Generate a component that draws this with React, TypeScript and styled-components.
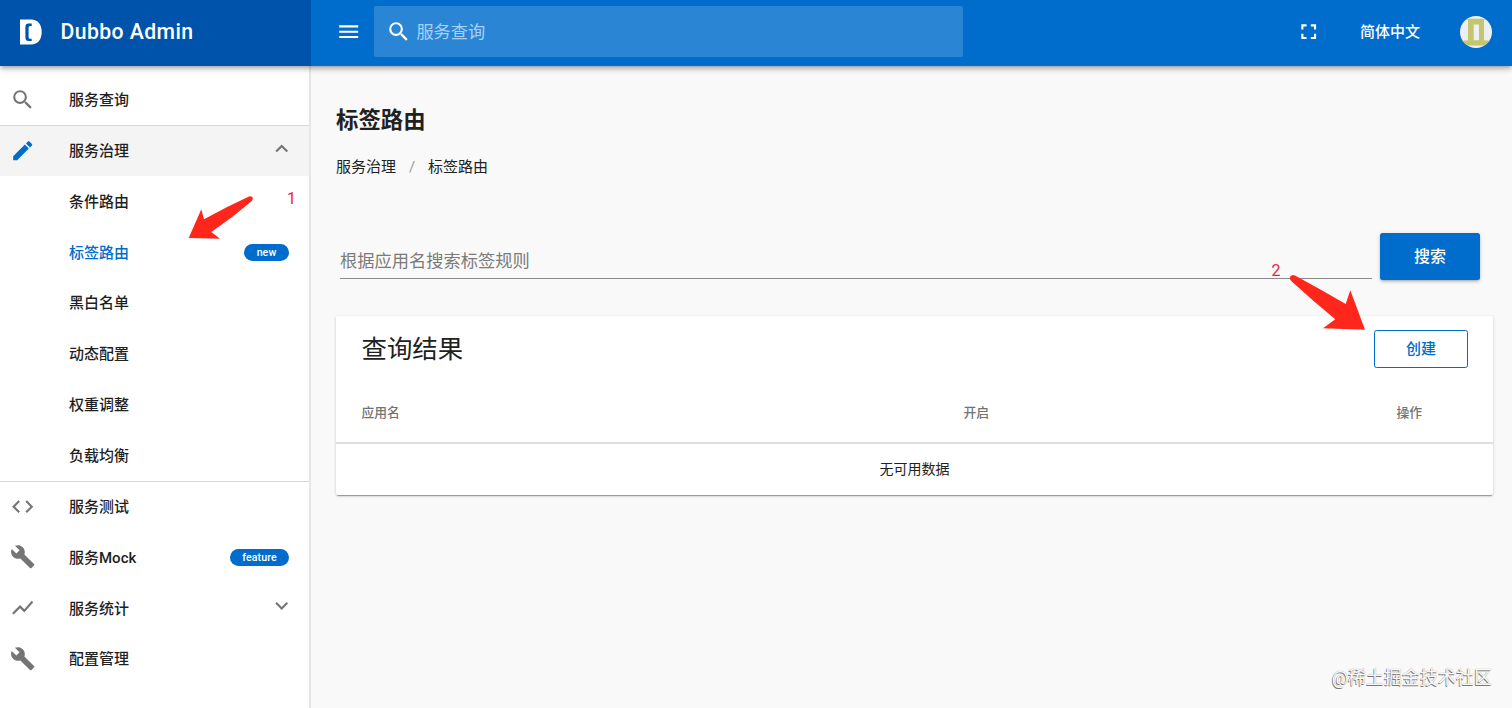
import React from 'react';
import styled, { createGlobalStyle, css } from 'styled-components';
import {
  MdBuild,
  MdCode,
  MdEdit,
  MdFullscreen,
  MdKeyboardArrowDown,
  MdKeyboardArrowUp,
  MdMenu,
  MdSearch,
  MdShowChart,
} from 'react-icons/md';

const BLUE = '#006ccb';
const BLUE_DARK = '#0053aa';

const GlobalStyle = createGlobalStyle`
  * { box-sizing: border-box; }
  body {
    margin: 0;
    background: #f9f9f9;
    color: #212121;
    font-family: Roboto, 'Noto Sans CJK SC', sans-serif;
    overflow: hidden;
  }
  svg { display: block; flex: none; }
`;

const Page = styled.div`
  position: relative;
  display: flex;
  flex-direction: column;
  height: 708px;
  overflow: hidden;
`;

const Header = styled.header`
  display: flex;
  flex: none;
  height: 66px;
  color: #fff;
  background: ${BLUE};
  box-shadow: 0 2px 4px -1px rgba(0, 0, 0, 0.25), 0 4px 5px rgba(0, 0, 0, 0.12), 0 1px 9px rgba(0, 0, 0, 0.1);
  z-index: 1;
`;

const Brand = styled.div`
  display: flex;
  align-items: center;
  width: 311px;
  padding: 0 0 3px 20px;
  background: ${BLUE_DARK};
`;

const BrandName = styled.span`
  margin: 1px 0 0 18.5px;
  font-size: 21.2px;
  font-weight: 500;
  letter-spacing: 0.42px;
  line-height: 30px;
`;

const Toolbar = styled.div`
  display: flex;
  flex: 1;
  align-items: center;
  padding: 0 20px 3px 25px;
`;

const SearchField = styled.div`
  display: flex;
  align-items: center;
  width: 589px;
  height: 51px;
  margin-left: 12.6px;
  padding-left: 12.5px;
  border-radius: 2px;
  background: #2b85d5;
`;

const SearchHint = styled.span`
  margin-left: 4.5px;
  font-size: 17.2px;
  line-height: 24px;
  color: #a6d3f5;
`;

const Actions = styled.div`
  display: flex;
  align-items: center;
  margin-left: auto;
`;

const Language = styled.span`
  margin: 0 40px 0 38.5px;
  font-size: 15px;
  font-weight: 500;
  line-height: 22px;
`;

const Body = styled.div`
  display: flex;
  flex: 1;
  min-height: 0;
`;

const Sidebar = styled.nav`
  flex: none;
  width: 311px;
  padding-top: 8px;
  background: #fff;
  border-right: 2px solid #e6e6e6;
`;

const MenuRow = styled.div<{ $shaded?: boolean; $active?: boolean; $line?: boolean }>`
  display: flex;
  align-items: center;
  height: 50.87px;
  padding: 0 15px 0 9.5px;
  font-size: 15px;
  font-weight: 500;
  color: ${(p) => (p.$active ? BLUE : '#1f1f1f')};
  background: ${(p) => (p.$shaded ? '#f4f4f4' : 'transparent')};
  ${(p) =>
    p.$line &&
    css`
      border-top: 1px solid #d8d8d8;
    `}
`;

const IconSlot = styled.span<{ $accent?: boolean }>`
  flex: none;
  width: 59.5px;
  color: ${(p) => (p.$accent ? BLUE : '#757575')};
`;

const Label = styled.span<{ $drop?: boolean }>`
  flex: 1;
  padding-top: ${(p) => (p.$drop ? 1.2 : 0)}px;
  line-height: 22px;
`;

const Chevron = styled.span`
  margin-bottom: 4px;
  color: #757575;
`;

const Pill = styled.span<{ $width: number }>`
  width: ${(p) => p.$width}px;
  height: 17px;
  margin-right: 5px;
  border-radius: 9px;
  background: ${BLUE};
  color: #fff;
  font-size: 10.6px;
  font-weight: 500;
  letter-spacing: 0.1px;
  line-height: 17px;
  text-align: center;
`;

const Content = styled.main`
  flex: 1;
  padding: 38px 19px 0 25px;
`;

const Title = styled.h1`
  margin: 0;
  font-size: 22.4px;
  font-weight: 700;
  line-height: 32px;
`;

const Crumbs = styled.div`
  display: flex;
  margin-top: 20px;
  font-size: 15px;
  line-height: 22px;
`;

const Slash = styled.span`
  width: 32px;
  text-align: center;
  color: #9a9a9a;
`;

const Query = styled.div`
  display: flex;
  margin: 55px 13px 0 4px;
  height: 47px;
`;

const QueryInput = styled.div`
  flex: 1;
  height: 46px;
  margin-right: 8px;
  padding-top: 16px;
  border-bottom: 1px solid #8c8c8c;
  color: #7b7b7b;
  font-size: 17.25px;
  line-height: 24px;
`;

const Button = styled.button<{ $outlined?: boolean }>`
  width: ${(p) => (p.$outlined ? 94 : 100)}px;
  height: ${(p) => (p.$outlined ? 38 : 47)}px;
  padding: 0 0 4px;
  border: ${(p) => (p.$outlined ? `1px solid ${BLUE}` : '0')};
  border-radius: 2.5px;
  background: ${(p) => (p.$outlined ? '#fff' : BLUE)};
  color: ${(p) => (p.$outlined ? BLUE : '#fff')};
  font-family: inherit;
  font-size: ${(p) => (p.$outlined ? 15 : 16)}px;
  font-weight: 500;
  box-shadow: ${(p) => (p.$outlined ? 'none' : '0 2px 3px -1px rgba(0,0,0,.25), 0 1px 4px rgba(0,0,0,.16)')};
`;

const Card = styled.section`
  margin-top: 36px;
  height: 179px;
  border-radius: 2px;
  background: #fff;
  box-shadow: 0 2px 1px -1px rgba(0, 0, 0, 0.3), 0 1px 3px rgba(0, 0, 0, 0.22);
`;

const CardHead = styled.div`
  display: flex;
  justify-content: space-between;
  height: 66px;
  padding: 14px 25px 0 25.5px;
`;

const CardTitle = styled.h2`
  margin: 0;
  font-size: 25.4px;
  font-weight: 400;
  line-height: 39px;
`;

const TableHead = styled.div`
  display: grid;
  grid-template-columns: 602px 433px 1fr;
  align-items: center;
  height: 62px;
  padding: 0 0 1px 25.4px;
  border-bottom: 2px solid #dedede;
  font-size: 12.8px;
  font-weight: 500;
  color: #737373;
`;

const Empty = styled.div`
  line-height: 50px;
  text-align: center;
  font-size: 14px;
`;

const Annotations = styled.svg`
  position: absolute;
  inset: 0;
  z-index: 2;
`;

const Mark = styled.span<{ $x: number; $y: number }>`
  position: absolute;
  left: ${(p) => p.$x}px;
  top: ${(p) => p.$y}px;
  z-index: 2;
  color: #ee1d3d;
  font-size: 16px;
  line-height: 18px;
`;

const Watermark = styled.span`
  position: absolute;
  right: 20px;
  bottom: 17px;
  color: #fafafa;
  font-size: 18px;
  line-height: 26px;
  text-shadow: -0.8px 0.8px 0.4px #777, 0 0 1px #888;
`;

const Logo = () => (
  <svg width="22" height="26" viewBox="0 0 22 26">
    <path fill="#fff" d="M0 .5h11C18 .5 21.700 5.500 21.700 13S18 25.500 11 25.500H0z" />
    <path fill={BLUE_DARK} d="M11.700 4.600H8.600Q5.400 4.600 5.400 8v10.500Q5.400 22 8.600 22H11.700V19.700H10Q8.600 19.700 8.600 18.200V8.400Q8.600 6.900 10 6.900H11.700z" />
  </svg>
);

const Avatar = () => (
  <svg width="32" height="32" viewBox="0 0 32 32">
    <defs>
      <clipPath id="avatar">
        <circle cx="16" cy="16" r="16" />
      </clipPath>
    </defs>
    <g clipPath="url(#avatar)">
      <path fill="#efeff2" d="M0 0h32v32H0z" />
      <path fill="#c2c66c" d="M5.500 2.800h21v1H24v20.700h8V29.500H0v-5h8V3.800H5.500z" />
      <path fill="#efeff2" d="M13.700 8.500H19v15.700h-5.300z" />
    </g>
  </svg>
);

const S = 25.4;

const RULES = ['条件路由', '标签路由', '黑白名单', '动态配置', '权重调整', '负载均衡'];

export default function App() {
  return (
    <Page>
      <GlobalStyle />
      <Header>
        <Brand>
          <Logo />
          <BrandName>Dubbo Admin</BrandName>
        </Brand>
        <Toolbar>
          <MdMenu size={S} />
          <SearchField>
            <MdSearch size={S} />
            <SearchHint>服务查询</SearchHint>
          </SearchField>
          <Actions>
            <MdFullscreen size={S} />
            <Language>简体中文</Language>
            <Avatar />
          </Actions>
        </Toolbar>
      </Header>
      <Body>
        <Sidebar>
          <MenuRow>
            <IconSlot><MdSearch size={S} /></IconSlot>
            <Label $drop>服务查询</Label>
          </MenuRow>
          <MenuRow $shaded $line>
            <IconSlot $accent><MdEdit size={S} /></IconSlot>
            <Label>服务治理</Label>
            <Chevron><MdKeyboardArrowUp size={S} /></Chevron>
          </MenuRow>
          {RULES.map((name) => (
            <MenuRow key={name} $active={name === '标签路由'}>
              <IconSlot />
              <Label $drop>{name}</Label>
              {name === '标签路由' && <Pill $width={45}>new</Pill>}
            </MenuRow>
          ))}
          <MenuRow $line>
            <IconSlot><MdCode size={S} /></IconSlot>
            <Label>服务测试</Label>
          </MenuRow>
          <MenuRow>
            <IconSlot><MdBuild size={S} /></IconSlot>
            <Label $drop>服务Mock</Label>
            <Pill $width={59}>feature</Pill>
          </MenuRow>
          <MenuRow>
            <IconSlot><MdShowChart size={S} /></IconSlot>
            <Label $drop>服务统计</Label>
            <Chevron><MdKeyboardArrowDown size={S} /></Chevron>
          </MenuRow>
          <MenuRow>
            <IconSlot><MdBuild size={S} /></IconSlot>
            <Label>配置管理</Label>
          </MenuRow>
        </Sidebar>
        <Content>
          <Title>标签路由</Title>
          <Crumbs>
            <span>服务治理</span>
            <Slash>/</Slash>
            <span>标签路由</span>
          </Crumbs>
          <Query>
            <QueryInput>根据应用名搜索标签规则</QueryInput>
            <Button>搜索</Button>
          </Query>
          <Card>
            <CardHead>
              <CardTitle>查询结果</CardTitle>
              <Button $outlined>创建</Button>
            </CardHead>
            <TableHead>
              <span>应用名</span>
              <span>开启</span>
              <span>操作</span>
            </TableHead>
            <Empty>无可用数据</Empty>
          </Card>
        </Content>
      </Body>
      <Annotations width="1512" height="708" viewBox="0 0 1512 708">
        <g fill="#ff261c">
          <path d="M188.700 238 201.300 209.200 204 219.300Q226 207 249 196.500Q252 195.600 252.800 198Q253 200 251.500 201.200Q232 218 211.300 232L220 238.700Z" />
          <path d="M1365 329.700 1350.300 290.200 1345.700 304Q1320 289 1295 275.500Q1292 274 1290.300 276.500Q1289 279 1291.500 281.200Q1313 301 1335.300 319.200L1323 328.300Z" />
        </g>
      </Annotations>
      <Mark $x={287} $y={190}>1</Mark>
      <Mark $x={1271.5} $y={262}>2</Mark>
      <Watermark>@稀土掘金技术社区</Watermark>
    </Page>
  );
}
